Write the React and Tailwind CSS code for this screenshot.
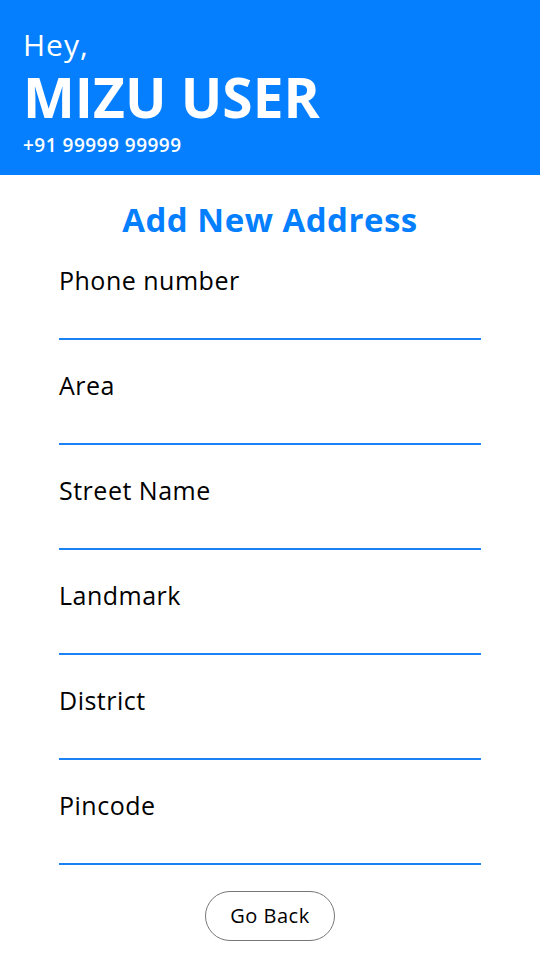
const fields = ["Phone number", "Area", "Street Name", "Landmark", "District", "Pincode"];

const App = () => {
  return (
    <div className="min-h-screen bg-white" style={{ fontFamily: "'Open Sans', sans-serif" }}>
      {/* header */}
      <div className="h-[175px] bg-[#057ffe] px-[23px] pt-[28px] text-white">
        <p className="text-[30px] leading-[34px] tracking-[1px]">Hey,</p>
        <h1 className="mt-[7px] text-[55px] font-bold leading-[56px]">MIZU USER</h1>
        <p className="mt-[9px] text-[19px] font-semibold leading-[22px] tracking-[0.5px]">+91 99999 99999</p>
      </div>

      <h2 className="mt-[25px] text-center text-[33px] font-bold leading-[40px] tracking-[0.5px] text-[#057ffe]">
        Add New Address
      </h2>

      <form className="flex flex-col gap-[28px] px-[59px] pt-[23px]">
        {fields.map((f) => (
          <label key={f} className="flex flex-col">
            <span className="text-[25px] leading-[34px] tracking-[0.5px] text-black">{f}</span>
            <input
              type="text"
              className="h-[43px] border-0 border-b-2 border-b-[#1a82f5] bg-transparent outline-none"
            />
          </label>
        ))}
      </form>

      <div className="mt-[26px] flex justify-center">
        <button className="h-[50px] w-[130px] rounded-full border border-[#777] text-[20px] tracking-[0.5px] text-black">
          Go Back
        </button>
      </div>
    </div>
  );
};

export default App;
